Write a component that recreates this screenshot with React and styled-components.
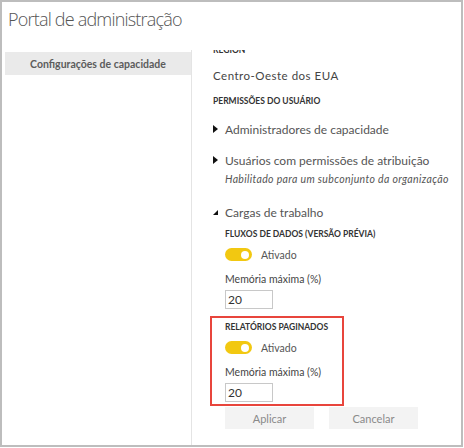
import styled, { createGlobalStyle } from 'styled-components';

const GlobalStyle = createGlobalStyle`
  body {
    margin: 0;
    background: #fff;
    font-family: "Lato", "Open Sans", sans-serif;
    color: #444;
  }
`;

const Frame = styled.div`
  width: 463px;
  height: 447px;
  box-sizing: border-box;
  border: 2px solid #bdbdbd;
  display: flex;
  flex-direction: column;
  overflow: hidden;
`;

const Title = styled.h1`
  margin: 0;
  height: 48px;
  padding: 4px 0 0 6px;
  box-sizing: border-box;
  font-family: "Open Sans", sans-serif;
  font-size: 18px;
  font-weight: 300;
  letter-spacing: -0.8px;
  line-height: 26px;
  color: #555;
`;

const Body = styled.div`
  flex: 1;
  display: grid;
  grid-template-columns: 190px 1fr;
  min-height: 0;
`;

const Sidebar = styled.nav`
  border-right: 1px solid #e4e4e4;
  padding: 2px 0 0 3px;
`;

const NavItem = styled.div`
  height: 23px;
  background: #eaeaea;
  display: flex;
  align-items: center;
  justify-content: center;
  font-size: 10.5px;
  font-weight: 700;
  color: #5c5c5c;
`;

const Content = styled.div`
  overflow: hidden;
  padding-left: 21px;
`;

const Scroller = styled.div`
  margin-top: -7px;
  display: flex;
  flex-direction: column;
`;

const Label = styled.div`
  margin-top: ${p => p.$mt || 0}px;
  font-size: 8.5px;
  font-weight: 700;
  line-height: 14px;
  height: 14px;
  color: #333;
  white-space: nowrap;
  text-transform: uppercase;
`;

const Value = styled.div`
  margin-top: ${p => p.$mt || 0}px;
  font-size: ${p => p.$size || 10.5}px;
  letter-spacing: ${p => p.$ls || 0}px;
  line-height: 16px;
  color: #444;
  white-space: nowrap;
`;

const Expander = styled.div`
  margin-top: ${p => p.$mt || 0}px;
  display: flex;
  align-items: center;
  gap: 7px;
  height: 18px;
  font-size: 12px;
  color: #555;
  white-space: nowrap;
`;

const Caret = styled.svg`
  width: 5px;
  height: 8px;
  flex: none;
`;

const Note = styled.div`
  margin-top: 3px;
  padding-left: 12px;
  font-size: 10.5px;
  font-style: italic;
  letter-spacing: 0.35px;
  line-height: 14px;
  color: #555;
  white-space: nowrap;
`;

const Workload = styled.div`
  padding-left: 12px;
  display: flex;
  flex-direction: column;
`;

const ToggleRow = styled.div`
  margin-top: 7px;
  display: flex;
  align-items: center;
  gap: 9px;
  height: 13px;
  font-size: 10.5px;
  color: #555;
`;

const Switch = styled.span`
  width: 27px;
  height: 13px;
  border-radius: 7px;
  background: #f2c811;
  position: relative;
  flex: none;

  &::after {
    content: '';
    position: absolute;
    right: 3px;
    top: 2.5px;
    width: 8px;
    height: 8px;
    border-radius: 50%;
    background: #fff;
  }
`;

const Field = styled.div`
  margin-top: 3px;
  width: 48px;
  height: 19px;
  box-sizing: border-box;
  border: 1px solid #c8c8c8;
  font-size: 12px;
  line-height: 17px;
  padding-left: 2px;
  color: #333;
`;

const Highlight = styled.div`
  margin: 7px 0 0 -15px;
  width: 134px;
  box-sizing: border-box;
  border: 2px solid #e8453c;
  padding: 2px 0 2px 13px;
  display: flex;
  flex-direction: column;
`;

const Actions = styled.div`
  margin-top: 1px;
  display: flex;
  gap: 15px;
`;

const Button = styled.button`
  width: 89px;
  height: 22px;
  border: none;
  background: #f3f3f3;
  color: #8a8a8a;
  font-family: inherit;
  font-size: 11px;
  padding: 0;
`;

const Right = () => (
  <Caret viewBox="0 0 5 8"><path d="M0 0 L5 4 L0 8 Z" fill="#111" /></Caret>
);

const Down = () => (
  <Caret viewBox="0 0 5 8"><path d="M5 2 L5 7 L0 7 Z" fill="#111" /></Caret>
);

const Setting = ({ title, mt }) => (
  <>
    <Label $mt={mt}>{title}</Label>
    <ToggleRow><Switch />Ativado</ToggleRow>
    <Value $mt={10}>Memória máxima (%)</Value>
    <Field>20</Field>
  </>
);

const App = () => (
  <>
    <GlobalStyle />
    <Frame>
      <Title>Portal de administração</Title>
      <Body>
        <Sidebar>
          <NavItem>Configurações de capacidade</NavItem>
        </Sidebar>
        <Content>
          <Scroller>
            <Label>Region</Label>
            <Value $mt={11} $size={11.5} $ls={0.5}>Centro-Oeste dos EUA</Value>
            <Label $mt={10}>Permissões do usuário</Label>
            <Expander $mt={12}><Right />Administradores de capacidade</Expander>
            <Expander $mt={13}><Right />Usuários com permissões de atribuição</Expander>
            <Note>Habilitado para um subconjunto da organização</Note>
            <Expander $mt={17}><Down />Cargas de trabalho</Expander>
            <Workload>
              <Setting title="Fluxos de dados (versão prévia)" mt={6} />
              <Highlight>
                <Setting title="Relatórios paginados" mt={0} />
              </Highlight>
              <Actions>
                <Button>Aplicar</Button>
                <Button>Cancelar</Button>
              </Actions>
            </Workload>
          </Scroller>
        </Content>
      </Body>
    </Frame>
  </>
);

export default App;
